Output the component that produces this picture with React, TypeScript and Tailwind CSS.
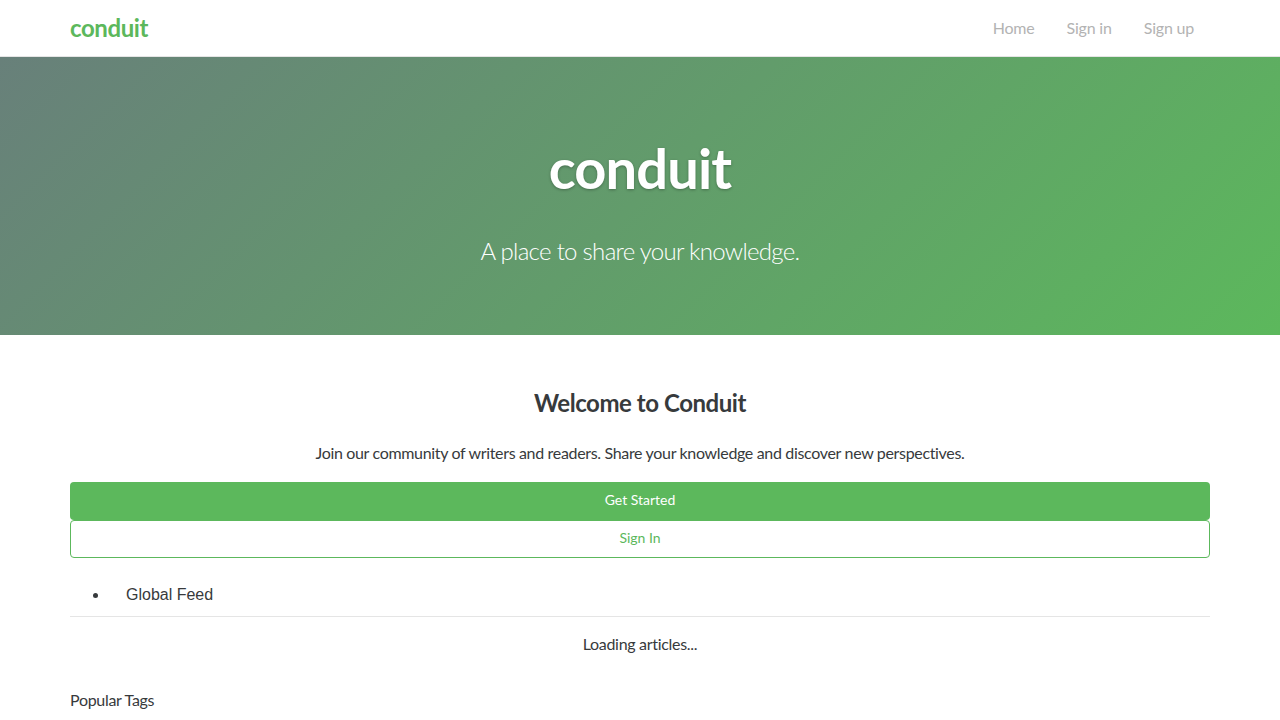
import React from "react";

const font = { fontFamily: "Lato, 'Noto Sans', sans-serif" };

export default function App() {
  return (
    <div className="min-h-screen bg-white text-[#373a3c]" style={font}>
      <nav className="h-[57px] border-b border-[#e5e5e5]">
        <div className="mx-auto flex h-full w-[1140px] items-center justify-between">
          <a className="text-[24px] font-bold tracking-[-0.4px] text-[#5cb85c] leading-none">conduit</a>
          <ul className="flex items-center pr-4">
            <li className="px-4 text-[16px] tracking-[-0.2px] text-[#b3b3b3]">Home</li>
            <li className="px-4 text-[16px] tracking-[-0.2px] text-[#b3b3b3]">Sign in</li>
            <li className="pl-4 text-[16px] tracking-[-0.2px] text-[#b3b3b3]">Sign up</li>
          </ul>
        </div>
      </nav>
      <div className="flex h-[278px] flex-col items-center bg-[linear-gradient(135deg,#68807a_0%,#5cb85c_100%)] text-white">
        <h1 className="mt-[83px] text-[56px] font-bold leading-none tracking-[-0.85px] [text-shadow:0_1px_3px_rgba(0,0,0,0.3)]">conduit</h1>
        <p className="mt-[43px] text-[24px] font-light leading-none tracking-[-0.7px]">A place to share your knowledge.</p>
      </div>
      <div className="mx-auto w-[1140px]">
        <h2 className="mt-[56px] text-center text-[24px] font-bold leading-none tracking-[-0.45px]">Welcome to Conduit</h2>
        <p className="mt-[30px] text-center text-[16px] leading-none tracking-[-0.33px]">Join our community of writers and readers. Share your knowledge and discover new perspectives.</p>
        <button className="mt-[21px] block h-[38px] w-full rounded bg-[#5cb85c] pb-[3px] text-[14px] text-white">Get Started</button>
        <button className="block h-[38px] w-full rounded border border-[#5cb85c] bg-white pb-[3px] text-[14px] text-[#5cb85c]">Sign In</button>
        <div className="border-b border-[#e5e5e5]">
          <ul className="list-disc pl-[39px] pt-[25px] pb-[9px]" style={{ fontFamily: "'Liberation Sans', Arial, sans-serif" }}>
            <li className="pl-[17px] text-[16px] leading-[24px] text-[#373a3c]">Global Feed</li>
          </ul>
        </div>
        <p className="mt-[19px] text-center text-[16px] leading-none tracking-[-0.3px]">Loading articles...</p>
        <p className="mt-[40px] text-[16px] leading-none tracking-[-0.3px]">Popular Tags</p>
      </div>
    </div>
  );
}
